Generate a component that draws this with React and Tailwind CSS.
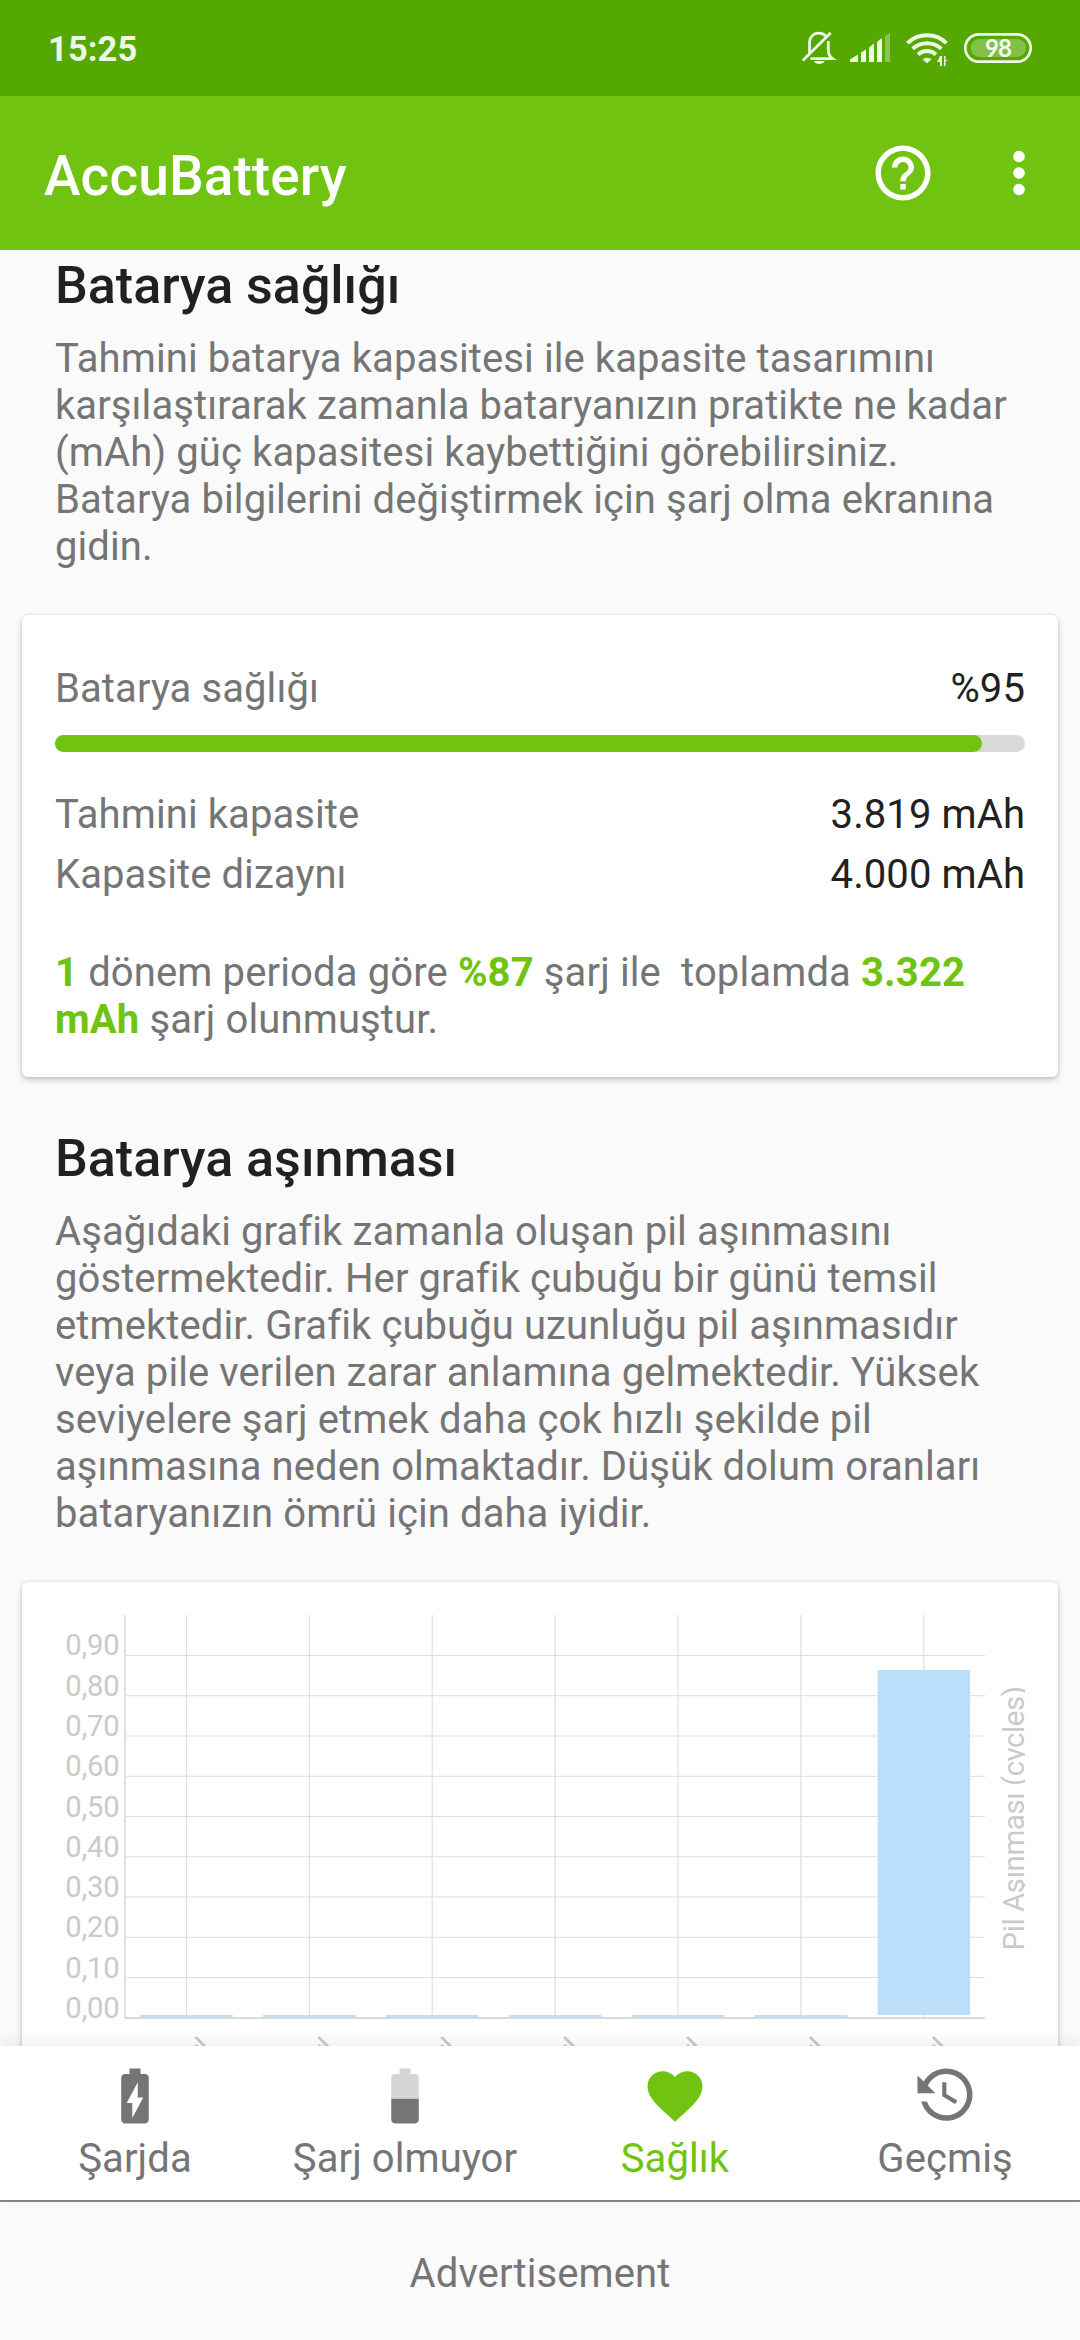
"use client"

import React from "react";

const NAV_ITEMS = [
  { id: "charging", label: "Şarjda" },
  { id: "discharging", label: "Şarj olmuyor" },
  { id: "health", label: "Sağlık" },
  { id: "history", label: "Geçmiş" },
];

const WEAR_TICKS = ["0,90", "0,80", "0,70", "0,60", "0,50", "0,40", "0,30", "0,20", "0,10", "0,00"];
const WEAR_VALUES = [0, 0, 0, 0, 0, 0, 0.86];

// Chart geometry, in pixels inside the card
const AXIS_LEFT = 103;
const AXIS_RIGHT = 963;
const AXIS_TOP = 33;
const AXIS_BOTTOM = 436;
const STEP_Y = 40.25;
const STEP_X = 122.9;

const StatusBar = () => (
  <div className="h-24 shrink-0 bg-[#55a800] flex items-center justify-between pl-12 pr-12 text-[#eef6e5]">
    <span className="mt-[3px] text-[34.5px] leading-none font-bold tracking-[0.1px]">15:25</span>
    <svg width="232" height="36" viewBox="800 30 232 36" fill="none">
      {/* muted bell */}
      <g stroke="currentColor" strokeWidth="2.8">
        <path d="M809.5 53V43.500C809.500 37 813.500 33.200 818.700 33.200C821.500 33.200 824 34.200 825.500 36" />
        <path d="M802.800 60.500L830.700 32.800" />
        <path d="M828.300 41V50C828.300 54 829.500 56.500 832.500 58.700H810.500" />
      </g>
      <path d="M814 61H824.500C823.500 63.200 821.800 64 819.200 64S815 63.200 814 61Z" fill="currentColor" />
      {/* signal */}
      <g fill="currentColor">
        <path d="M850 62V59.500L858 54.500V62Z" />
        <path d="M861 62V52.500L866 49.500V62Z" />
        <path d="M869 62V47.500L874 43.500V62Z" />
        <path d="M877 62V42L882 38V62Z" />
        <path d="M885 62V36L890 33V62Z" opacity="0.35" />
      </g>
      {/* wifi */}
      <g stroke="currentColor" strokeWidth="4">
        <path d="M907.500 43.100A28 28 0 0 1 946.500 43.100" />
        <path d="M912.700 48.800A21 21 0 0 1 941.300 48.800" />
        <path d="M918 54.500A13.500 13.500 0 0 1 936 54.500" />
      </g>
      <path d="M922.500 59.300A7 7 0 0 1 931.500 59.300L927 63.200Z" fill="currentColor" />
      <g fill="currentColor">
        <path d="M940 56H942V66H940V62H937Z" />
        <path d="M944 56H945.500V60H948.500L945.500 61V66H944Z" />
      </g>
      {/* battery */}
      <rect x="965.300" y="34.300" width="65.400" height="27.400" rx="13.700" stroke="currentColor" strokeWidth="2.700" />
      <rect x="970.500" y="39" width="55.500" height="18" rx="9" fill="#82c146" />
      <text x="998" y="57" textAnchor="middle" fontSize="24" fontWeight="700" fill="#f5faef" letterSpacing="-0.8" className="font-[Lato]">98</text>
    </svg>
  </div>
);

const AppBar = () => (
  <div className="h-[154px] shrink-0 bg-[#70c411] flex items-center justify-between pl-11 pr-[35px] text-white">
    <h1 className="mt-1.5 text-[55px] leading-none font-medium tracking-[0.1px]">AccuBattery</h1>
    <div className="flex items-center gap-[57px]">
      <svg className="w-[66px] h-[66px]" viewBox="0 0 24 24" fill="currentColor">
        <path d="M11 18h2v-2h-2v2zm1-16C6.480 2 2 6.480 2 12s4.480 10 10 10 10-4.480 10-10S17.520 2 12 2zm0 18c-4.410 0-8-3.590-8-8s3.590-8 8-8 8 3.590 8 8-3.590 8-8 8zm0-14c-2.210 0-4 1.790-4 4h2c0-1.100.9-2 2-2s2 .9 2 2c0 2-3 1.750-3 5h2c0-2.250 3-2.500 3-5 0-2.210-1.790-4-4-4z" />
      </svg>
      <svg className="w-[52px] h-[66px]" viewBox="0 0 52 66" fill="currentColor">
        <circle cx="26" cy="16.500" r="5.800" />
        <circle cx="26" cy="33" r="5.800" />
        <circle cx="26" cy="49.500" r="5.800" />
      </svg>
    </div>
  </div>
);

const Card = ({ className, children }) => (
  <div className={`mx-[22px] bg-white rounded-[6px] shadow-[0_3px_6px_rgba(0,0,0,0.2),0_0_3px_rgba(0,0,0,0.12)] ${className}`}>
    {children}
  </div>
);

const Row = ({ label, value }) => (
  <div className="flex justify-between leading-[60px]">
    <span>{label}</span>
    <span className="text-[#212121]">{value}</span>
  </div>
);

const WearChart = () => (
  <svg className="block w-full h-[560px] tracking-normal" viewBox="0 0 1036 560">
    <g stroke="#dedede" strokeWidth="1.200">
      {WEAR_TICKS.slice(0, -1).map((tick, i) => (
        <line key={tick} x1={AXIS_LEFT} x2={AXIS_RIGHT} y1={73.500 + i * STEP_Y} y2={73.500 + i * STEP_Y} />
      ))}
      {WEAR_VALUES.map((_, i) => (
        <line key={i} x1={164.400 + i * STEP_X} x2={164.400 + i * STEP_X} y1={AXIS_TOP} y2={AXIS_BOTTOM} />
      ))}
    </g>
    <g fill="#bbdefb">
      {WEAR_VALUES.map((value, i) => (
        <rect
          key={i}
          x={118.200 + i * STEP_X}
          y={value ? 88 : 433}
          width="92.500"
          height={value ? 345 : 3}
        />
      ))}
    </g>
    <line x1={AXIS_LEFT} x2={AXIS_LEFT} y1={AXIS_TOP} y2={AXIS_BOTTOM} stroke="#e0e0e0" strokeWidth="2" />
    <line x1={AXIS_LEFT} x2={AXIS_RIGHT} y1={AXIS_BOTTOM} y2={AXIS_BOTTOM} stroke="#d9d9d9" strokeWidth="2" />
    <g fill="#cacaca" fontSize="29.200" letterSpacing="-0.200" textAnchor="end">
      {WEAR_TICKS.map((tick, i) => (
        <text key={tick} x="97.500" y={73.300 + i * 40.3}>{tick}</text>
      ))}
    </g>
    {/* Slanted day labels, mostly hidden under the tab bar */}
    <g stroke="#cacaca" strokeWidth="2.800">
      {WEAR_VALUES.map((_, i) => (
        <g key={i}>
          <line x1={173.500 + i * STEP_X} x2={189.500 + i * STEP_X} y1="455" y2="471" />
          <line x1={173.500 + i * STEP_X} x2={177.500 + i * STEP_X} y1="463" y2="467" />
        </g>
      ))}
    </g>
    {/* The axis title is cut off just under its baseline */}
    <clipPath id="axisTitle">
      <rect x="970" y="80" width="33" height="310" />
    </clipPath>
    <g clipPath="url(#axisTitle)">
      <text transform="translate(1002.200 368.500) rotate(-90)" fill="#cacaca" fontSize="29.500" letterSpacing="-0.430">
        Pil Aşınması (cycles)
      </text>
    </g>
  </svg>
);

const NavIcon = ({ id }) => {
  switch (id) {
    case "charging":
      return <path d="M15.670 4H14V2h-4v2H8.330C7.600 4 7 4.600 7 5.330v15.330C7 21.400 7.600 22 8.330 22h7.330c.74 0 1.340-.6 1.340-1.330V5.330C17 4.600 16.400 4 15.670 4zM11 20v-5.500H9L13 7v5.500h2L11 20z" />;
    case "discharging":
      return (
        <>
          <path opacity=".3" d="M17 5.330C17 4.600 16.400 4 15.670 4H14V2h-4v2H8.330C7.600 4 7 4.600 7 5.330V13h10V5.330z" />
          <path d="M7 13v7.670C7 21.400 7.600 22 8.330 22h7.330c.74 0 1.340-.6 1.340-1.330V13H7z" />
        </>
      );
    case "health":
      return <path d="M12 21.350l-1.450-1.320C5.400 15.360 2 12.280 2 8.500 2 5.420 4.420 3 7.500 3c1.740 0 3.410.81 4.500 2.090C13.090 3.810 14.760 3 16.500 3 19.580 3 22 5.420 22 8.500c0 3.780-3.400 6.860-8.550 11.540L12 21.350z" />;
    default:
      return <path d="M11 7v5.110l4.710 2.790.79-1.280-4-2.370V7M12.500 2C8.970 2 5.910 3.920 4.270 6.770L2 4.500V11h6.500L5.750 8.250C6.960 5.730 9.500 4 12.500 4a7.500 7.500 0 0 1 7.500 7.500 7.500 7.500 0 0 1-7.500 7.500c-3.270 0-6.030-2.090-7.060-5h-2.100c1.100 4.030 4.770 7 9.160 7 5.240 0 9.500-4.250 9.500-9.500A9.500 9.500 0 0 0 12.500 2z" />;
  }
};

const BottomNav = ({ active }) => (
  <nav className="relative h-[154px] shrink-0 grid grid-cols-4 bg-white shadow-[0_-4px_16px_rgba(0,0,0,0.07)]">
    {NAV_ITEMS.map((item) => (
      <div
        key={item.id}
        className={`flex flex-col items-center pt-[17px] ${item.id === active ? "text-[#70c411]" : "text-[#757575]"}`}
      >
        <svg className="w-[66px] h-[66px]" viewBox="0 0 24 24" fill="currentColor">
          <NavIcon id={item.id} />
        </svg>
        <span className="mt-1.5 leading-[47px]">{item.label}</span>
      </div>
    ))}
  </nav>
);

const App = () => {
  return (
    <div className="h-[2340px] w-[1080px] flex flex-col overflow-hidden bg-[#fafafa] font-[Roboto,sans-serif] text-[40px] leading-[47px] tracking-[0.09px] text-[#757575]">
      <StatusBar />
      <AppBar />

      <main className="flex-1 min-h-0 overflow-hidden">
        <h2 className="mt-1.5 px-[55px] text-[52px] leading-[60px] font-medium tracking-normal text-[#212121]">Batarya sağlığı</h2>
        <p className="mt-[19px] px-[55px] whitespace-nowrap">
          Tahmini batarya kapasitesi ile kapasite tasarımını<br />
          karşılaştırarak zamanla bataryanızın pratikte ne kadar<br />
          (mAh) güç kapasitesi kaybettiğini görebilirsiniz.<br />
          Batarya bilgilerini değiştirmek için şarj olma ekranına<br />
          gidin.
        </p>

        <Card className="mt-[45px] h-[462px] px-[33px] pt-11">
          <Row label="Batarya sağlığı" value="%95" />
          <div className="mt-4 mb-[33px] h-[17px] rounded-full bg-[#d9d9d9]">
            <div className="h-full rounded-full bg-[#70c411]" style={{ width: "95.6%" }}></div>
          </div>
          <Row label="Tahmini kapasite" value="3.819 mAh" />
          <Row label="Kapasite dizaynı" value="4.000 mAh" />
          <p className="mt-11 whitespace-pre tracking-[0.13px]">
            <b className="text-[#70c411]">1</b> dönem perioda göre <b className="text-[#70c411]">%87</b> şarj ile{"  "}toplamda <b className="text-[#70c411]">3.322</b><br />
            <b className="text-[#70c411]">mAh</b> şarj olunmuştur.
          </p>
        </Card>

        <h2 className="mt-[52px] px-[55px] text-[52px] leading-[60px] font-medium tracking-normal text-[#212121]">Batarya aşınması</h2>
        <p className="mt-[19px] px-[55px] whitespace-nowrap">
          Aşağıdaki grafik zamanla oluşan pil aşınmasını<br />
          göstermektedir. Her grafik çubuğu bir günü temsil<br />
          etmektedir. Grafik çubuğu uzunluğu pil aşınmasıdır<br />
          veya pile verilen zarar anlamına gelmektedir. Yüksek<br />
          seviyelere şarj etmek daha çok hızlı şekilde pil<br />
          aşınmasına neden olmaktadır. Düşük dolum oranları<br />
          bataryanızın ömrü için daha iyidir.
        </p>

        <Card className="mt-[45px]">
          <WearChart />
        </Card>
      </main>

      <BottomNav active="health" />
      <div className="h-[140px] shrink-0 border-t-2 border-[#868686] flex items-center justify-center pt-1">
        Advertisement
      </div>
    </div>
  );
};

export default App;
